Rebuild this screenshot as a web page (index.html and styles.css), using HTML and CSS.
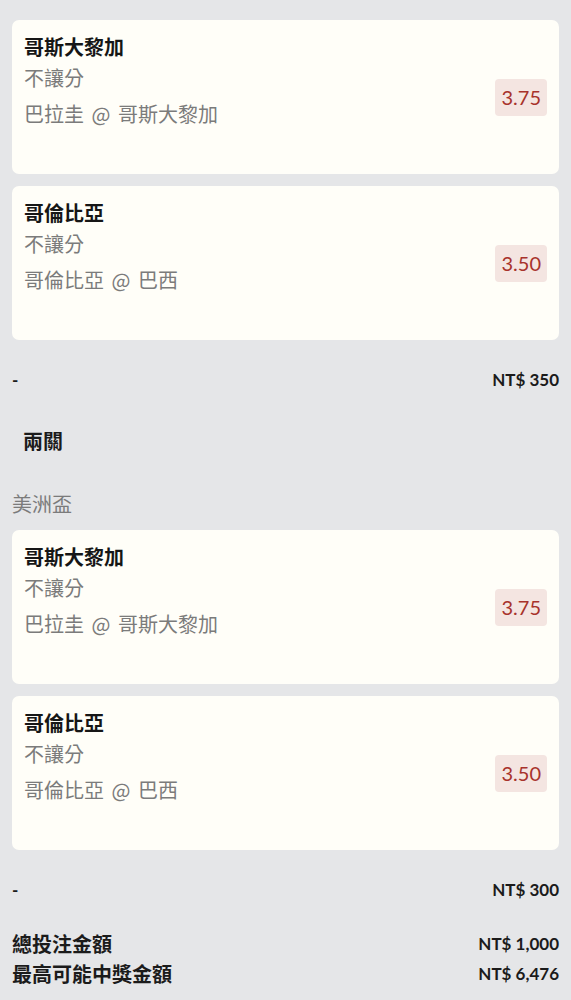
FILE: index.html
```html
<!DOCTYPE html>
<html lang="zh-Hant">
<head>
    <meta charset="UTF-8">
    <meta name="viewport" content="width=device-width, initial-scale=1.0">
    <title>投注單</title>
    <link rel="stylesheet" href="styles.css">
</head>
<body>
    <div class="slip">
        <!-- 單場 -->
        <div class="bet-card">
            <div class="bet-info">
                <div class="bet-team">哥斯大黎加</div>
                <div class="bet-market">不讓分</div>
                <div class="bet-match">巴拉圭 @ 哥斯大黎加</div>
            </div>
            <div class="odds">3.75</div>
        </div>
        <div class="bet-card">
            <div class="bet-info">
                <div class="bet-team">哥倫比亞</div>
                <div class="bet-market">不讓分</div>
                <div class="bet-match">哥倫比亞 @ 巴西</div>
            </div>
            <div class="odds">3.50</div>
        </div>
        <div class="subtotal">
            <span>-</span>
            <span>NT$ 350</span>
        </div>

        <!-- 兩關 -->
        <div class="parlay-title">兩關</div>
        <div class="league">美洲盃</div>
        <div class="bet-card">
            <div class="bet-info">
                <div class="bet-team">哥斯大黎加</div>
                <div class="bet-market">不讓分</div>
                <div class="bet-match">巴拉圭 @ 哥斯大黎加</div>
            </div>
            <div class="odds">3.75</div>
        </div>
        <div class="bet-card">
            <div class="bet-info">
                <div class="bet-team">哥倫比亞</div>
                <div class="bet-market">不讓分</div>
                <div class="bet-match">哥倫比亞 @ 巴西</div>
            </div>
            <div class="odds">3.50</div>
        </div>
        <div class="subtotal">
            <span>-</span>
            <span>NT$ 300</span>
        </div>

        <!-- 合計 -->
        <div class="summary">
            <div class="summary-row">
                <span class="summary-label">總投注金額</span>
                <span class="summary-value">NT$ 1,000</span>
            </div>
            <div class="summary-row">
                <span class="summary-label">最高可能中獎金額</span>
                <span class="summary-value">NT$ 6,476</span>
            </div>
        </div>
    </div>
</body>
</html>
```

FILE: styles.css
```css
* {
    margin: 0;
    padding: 0;
    box-sizing: border-box;
}

body {
    font-family: Lato, "Noto Sans CJK TC", sans-serif;
    background-color: #e5e6e8;
    color: #1b1b1b;
}

.slip {
    padding: 20px 12px 0;
}

.bet-card {
    display: flex;
    align-items: center;
    justify-content: space-between;
    height: 154px;
    padding: 12px;
    margin-bottom: 12px;
    background-color: #fffef8;
    border-radius: 7px;
}

.bet-info {
    padding-bottom: 35px;
    font-family: "Noto Sans CJK TC", sans-serif;
    font-size: 20px;
}

.bet-team {
    line-height: 31px;
    font-weight: bold;
    color: #161616;
}

.bet-market {
    line-height: 31px;
    color: #7b7b7b;
}

.bet-match {
    margin-top: 5px;
    line-height: 31px;
    word-spacing: 3px;
    color: #7b7b7b;
}

.odds {
    padding: 0 6px;
    height: 37px;
    line-height: 37px;
    font-size: 20px;
    color: #a8332c;
    background-color: #f4e5e1;
    border-radius: 4px;
}

.subtotal {
    display: flex;
    justify-content: space-between;
    margin-top: 28px;
    line-height: 24px;
    font-size: 17px;
    font-weight: bold;
}

.parlay-title {
    margin-top: 34px;
    padding-left: 11px;
    line-height: 30px;
    font-size: 20px;
    font-weight: bold;
}

.league {
    margin-top: 33px;
    margin-bottom: 11px;
    line-height: 30px;
    font-family: "Noto Sans CJK TC", sans-serif;
    font-size: 20px;
    color: #7b7b7b;
}

.summary {
    margin-top: 27px;
}

.summary-row {
    display: flex;
    justify-content: space-between;
    align-items: center;
    line-height: 30px;
}

.summary-label {
    font-size: 20px;
    font-weight: bold;
}

.summary-value {
    font-size: 17px;
    font-weight: bold;
}
```
